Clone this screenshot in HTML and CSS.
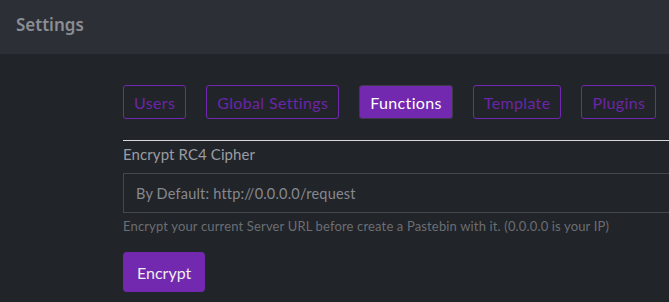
FILE: index.html
```html
<!DOCTYPE html>
<html lang="en">
<head>
  <meta charset="UTF-8">
  <title>Settings</title>
  <link rel="stylesheet" href="styles.css">
</head>
<body>
  <div class="topbar">Settings</div>
  <div class="content">
    <div class="tabs">
      <button class="tab">Users</button>
      <button class="tab">Global Settings</button>
      <button class="tab active">Functions</button>
      <button class="tab">Template</button>
      <button class="tab">Plugins</button>
    </div>
    <div class="panel">
      <label class="field-label">Encrypt RC4 Cipher</label>
      <input type="text" class="field-input" placeholder="By Default: http://0.0.0.0/request">
      <p class="help">Encrypt your current Server URL before create a Pastebin with it. (0.0.0.0 is your IP)</p>
      <button class="btn">Encrypt</button>
    </div>
  </div>
</body>
</html>
```

FILE: styles.css
```css
body {
  margin: 0;
  background: #212428;
  font-family: Lato, "Open Sans", sans-serif;
  overflow: hidden;
}

.topbar {
  height: 54px;
  background: #2c2f35;
  color: #8a8d93;
  font-family: "Noto Sans", sans-serif;
  font-weight: 600;
  font-size: 17px;
  line-height: 50px;
  padding-left: 16px;
}

.content {
  margin-left: 123px;
  width: 620px;
  padding-top: 31px;
}

.tabs {
  display: flex;
  gap: 20px;
  padding-bottom: 21px;
  border-bottom: 1px solid #d8d8d8;
}

.tab {
  height: 34px;
  padding: 0 10px;
  background: transparent;
  border: 1px solid #7328b0;
  border-radius: 3px;
  color: #6c25a8;
  font-family: inherit;
  font-size: 16px;
  letter-spacing: 0.35px;
}

.tab.active {
  background: #7328b0;
  border-color: #3f3a4a;
  color: #fff;
}

.field-label {
  display: block;
  margin-top: 3px;
  color: #9a9da3;
  font-size: 15px;
  letter-spacing: 0.1px;
  line-height: 20px;
}

.field-input {
  display: block;
  box-sizing: border-box;
  width: 100%;
  height: 40px;
  margin-top: 9px;
  padding: 0 12px;
  background: transparent;
  border: 1px solid #44474d;
  font-family: inherit;
  font-size: 14.5px;
  letter-spacing: 0.2px;
}

.field-input::placeholder {
  color: #868990;
}

.help {
  margin: 4px 0 0;
  color: #6b6e74;
  font-size: 13px;
  letter-spacing: 0.15px;
  line-height: 18px;
}

.btn {
  margin-top: 17px;
  height: 40px;
  padding: 0 14px;
  background: #7328b0;
  border: none;
  border-radius: 4px;
  color: #eee;
  font-family: inherit;
  font-size: 16px;
}
```
